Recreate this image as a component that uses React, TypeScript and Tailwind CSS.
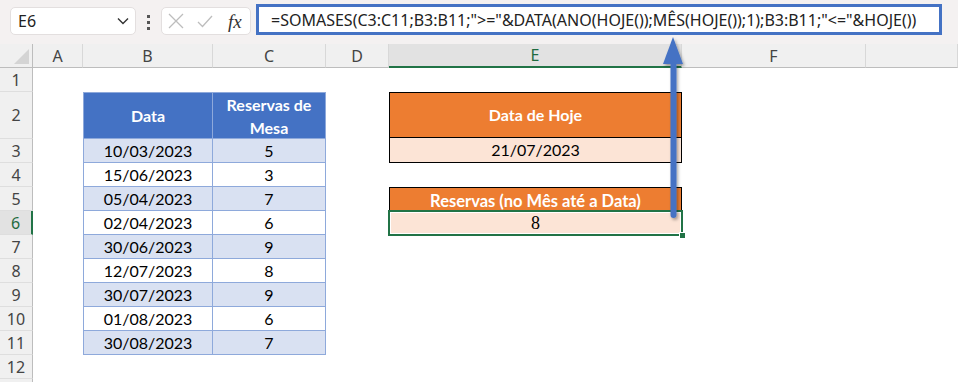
import React from 'react';

const rows: [string, string][] = [
  ['10/03/2023', '5'],
  ['15/06/2023', '3'],
  ['05/04/2023', '7'],
  ['02/04/2023', '6'],
  ['30/06/2023', '9'],
  ['12/07/2023', '8'],
  ['30/07/2023', '9'],
  ['01/08/2023', '6'],
  ['30/08/2023', '7'],
];

const hdrFont = "font-['Noto_Sans',sans-serif]";
const cellFont = "font-['Lato',sans-serif]";

function ColHeader({ label, w, active }: { label: string; w: string; active?: boolean }) {
  return (
    <div
      className={`${w} shrink-0 h-full flex items-center justify-center border-r border-[#d8d8d8] text-[16px] ${
        active
          ? 'bg-[#e2e2e2] text-[#1f6b3f] border-b-2 border-b-[#217346]'
          : 'bg-[#f0f0f0] text-[#444] border-b border-b-[#bdbdbd]'
      }`}
    >
      {label}
    </div>
  );
}

export default function App() {
  const rowNums = Array.from({ length: 13 }, (_, i) => i + 1);
  return (
    <div className="relative w-[958px] h-[382px] overflow-hidden bg-white">
      {/* Formula bar */}
      <div className={`h-[44px] bg-[#f4f1f1] flex items-start ${hdrFont}`}>
        <div className="ml-[10px] mt-[7px] w-[126px] h-[28px] rounded-[5px] bg-white border border-[#e3dfdf] flex items-center justify-between pl-[7px] pr-[6px]">
          <span className="text-[16px] text-[#222]">E6</span>
          <svg width="12" height="8" viewBox="0 0 12 8">
            <path d="M1 1.5 L6 6.5 L11 1.5" fill="none" stroke="#333" strokeWidth="1.4" />
          </svg>
        </div>
        <div className="ml-[11px] mt-[15px] flex flex-col gap-[3px]">
          <div className="w-[3px] h-[3px] bg-[#555]" />
          <div className="w-[3px] h-[3px] bg-[#555]" />
          <div className="w-[3px] h-[3px] bg-[#555]" />
        </div>
        <div className="ml-[11px] mt-[7px] w-[90px] h-[28px] rounded-[5px] bg-white border border-[#e3dfdf] flex items-center pl-[6px]">
          <svg width="16" height="16" viewBox="0 0 16 16">
            <path d="M1 1 L15 15 M15 1 L1 15" stroke="#bdbdbd" strokeWidth="1.3" />
          </svg>
          <svg className="ml-[13px]" width="16" height="13" viewBox="0 0 16 13">
            <path d="M1 7 L5.5 11.5 L15 1" fill="none" stroke="#bdbdbd" strokeWidth="1.3" />
          </svg>
          <span className="ml-[15px] text-[19px] italic font-['Liberation_Serif',serif] text-[#333] leading-none">
            fx
          </span>
        </div>
        <div className="ml-[5px] mt-[4px] w-[686px] h-[31px] border-[3px] border-[#4472c4] bg-white flex items-center pl-[12px]">
          <span className="text-[16px] text-[#222] whitespace-nowrap">
            =SOMASES(C3:C11;B3:B11;"&gt;="&amp;DATA(ANO(HOJE());MÊS(HOJE());1);B3:B11;"&lt;="&amp;HOJE())
          </span>
        </div>
      </div>

      {/* Column headers */}
      <div className={`h-[24px] flex ${hdrFont}`}>
        <div className="w-[33px] shrink-0 h-full bg-[#f0f0f0] border-r border-b border-[#bdbdbd] relative">
          <svg className="absolute right-[3px] bottom-[3px]" width="15" height="15" viewBox="0 0 15 15">
            <polygon points="15,0 15,15 0,15" fill="#d4d4d4" />
          </svg>
        </div>
        <ColHeader label="A" w="w-[50px]" />
        <ColHeader label="B" w="w-[130px]" />
        <ColHeader label="C" w="w-[113px]" />
        <ColHeader label="D" w="w-[63px]" />
        <ColHeader label="E" w="w-[293px]" active />
        <ColHeader label="F" w="w-[184px]" />
        <ColHeader label="" w="w-[92px]" />
      </div>

      {/* Body */}
      <div className="flex">
        <div className={`w-[33px] shrink-0 flex flex-col ${hdrFont}`}>
          {rowNums.map((n) => (
            <div
              key={n}
              className={`${n === 2 ? 'h-[47px]' : 'h-[24px]'} shrink-0 flex items-center justify-center text-[16px] border-b border-[#dedede] ${
                n === 6
                  ? 'bg-[#e2e2e2] text-[#1f6b3f] border-r-2 border-r-[#217346]'
                  : 'bg-[#f0f0f0] text-[#444] border-r border-r-[#bdbdbd]'
              }`}
            >
              {n <= 12 ? n : ''}
            </div>
          ))}
        </div>
        <div
          className={`grid grid-cols-[50px_130px_113px_63px_293px_184px_1fr] grid-rows-[24px_47px_repeat(11,24px)] flex-1 ${cellFont} text-[16px] text-black`}
        >
          {/* Table B2:C11 */}
          <div className="col-start-2 col-span-2 row-start-2 row-span-10 self-start border-l border-t border-[#8ea9db] grid grid-cols-[129px_1fr] grid-rows-[46px_repeat(9,24px)]">
            <div className="bg-[#4472c4] text-white font-bold flex items-center justify-center border-r border-b border-[#8ea9db]">
              Data
            </div>
            <div className="bg-[#4472c4] text-white font-bold flex items-center justify-center text-center leading-[23px] border-r border-b border-[#8ea9db] px-2">
              Reservas de Mesa
            </div>
            {rows.map(([d, v], i) => (
              <React.Fragment key={i}>
                <div
                  className={`${i % 2 === 0 ? 'bg-[#d9e1f2]' : 'bg-white'} flex items-center justify-center border-r border-b border-[#8ea9db]`}
                >
                  {d}
                </div>
                <div
                  className={`${i % 2 === 0 ? 'bg-[#d9e1f2]' : 'bg-white'} flex items-center justify-center border-r border-b border-[#8ea9db]`}
                >
                  {v}
                </div>
              </React.Fragment>
            ))}
          </div>

          {/* E2:E3 */}
          <div className="col-start-5 row-start-2 row-span-2 border border-black flex flex-col">
            <div className="h-[46px] bg-[#ed7d31] text-white font-bold flex items-center justify-center border-b border-black">
              Data de Hoje
            </div>
            <div className="flex-1 bg-[#fce4d6] flex items-center justify-center">21/07/2023</div>
          </div>

          {/* E5:E6 */}
          <div className="col-start-5 row-start-5 row-span-2 flex flex-col">
            <div className="h-[24px] bg-[#ed7d31] text-white font-bold text-[16.5px] flex items-end justify-center border-t border-l border-r border-black leading-[19px]">
              Reservas (no Mês até a Data)
            </div>
            <div className="relative h-[24px] bg-[#fce4d6] flex items-center justify-center font-['Liberation_Serif',serif] text-[18px]">
              8
              <div className="absolute -left-[1px] -top-[1px] -right-[1px] -bottom-[1px] border-2 border-[#217346]">
                <div className="w-full h-full border border-white" />
              </div>
              <div className="absolute -right-[4px] -bottom-[4px] w-[7px] h-[7px] bg-[#217346] border border-white" />
            </div>
          </div>
        </div>
      </div>

      {/* Arrow overlay */}
      <svg className="absolute left-[653px] top-[30px]" width="42" height="200" viewBox="0 0 42 200">
        <defs>
          <filter id="sh" x="-50%" y="-10%" width="200%" height="130%">
            <feDropShadow dx="1.5" dy="2" stdDeviation="1.5" floodColor="#000" floodOpacity="0.35" />
          </filter>
        </defs>
        <g filter="url(#sh)">
          <rect x="17.5" y="30" width="6" height="158" rx="3" fill="#4472c4" />
          <polygon points="10,34 30,34 20,7" fill="#4472c4" />
        </g>
      </svg>
    </div>
  );
}
